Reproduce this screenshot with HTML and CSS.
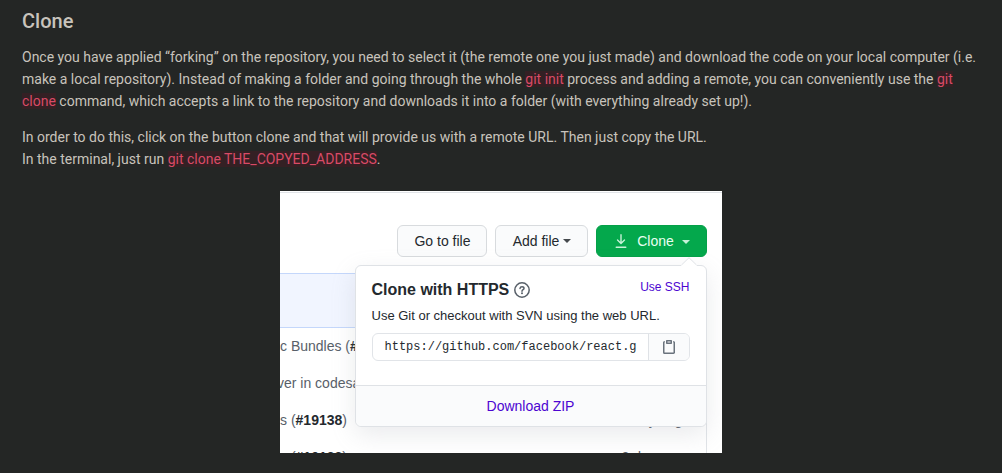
FILE: index.html
```html
<!DOCTYPE html>
<html lang="en">
<head>
<meta charset="utf-8">
<title>Clone</title>
<link rel="stylesheet" href="styles.css">
</head>
<body>
<main class="article">
  <h2 class="title">Clone</h2>
  <p class="para">Once you have applied “forking” on the repository, you need to select it (the remote one you just made) and download the code on your local computer (i.e. make a local repository). Instead of making a folder and going through the whole <code class="code">git init</code> process and adding a remote, you can conveniently use the <code class="code">git clone</code> command, which accepts a link to the repository and downloads it into a folder (with everything already set up!).</p>
  <p class="para">In order to do this, click on the button clone and that will provide us with a remote URL. Then just copy the URL.<br>In the terminal, just run <code class="code">git clone THE_COPYED_ADDRESS</code>.</p>
  <section class="shot">
    <div class="toolbar">
      <button class="btn btn-go">Go to file</button>
      <button class="btn btn-add">Add file<span class="caret"></span></button>
      <div class="clone-wrap">
        <button class="btn btn-clone">
          <svg class="dl" width="16" height="16" viewBox="0 0 16 16" fill="none" stroke="currentColor" stroke-width="1.4" stroke-linecap="round" stroke-linejoin="round"><path d="M8 1.800v8.400M4.500 7 8 10.500 11.500 7M3.200 14.200h9.600"/></svg>
          <span>Clone</span><span class="caret"></span>
        </button>
        <div class="popover">
          <svg class="tip" width="16" height="9" viewBox="0 0 16 9"><path d="M0 8.500 8 .7l8 7.800V9H0z" fill="#fff"/><path d="M.5 8 8 .7 15.500 8" fill="none" stroke="#dfe2e6"/></svg>
          <div class="pop-body">
            <div class="pop-head">
              <strong class="pop-title">Clone with HTTPS</strong>
              <svg class="help" width="16" height="16" viewBox="0 0 16 16" fill="none" stroke="currentColor" stroke-width="1.5"><circle cx="8" cy="8" r="7.200"/><path d="M6 6.400C6.200 5.300 7 4.800 8 4.800c1.200 0 2 .7 2 1.600C10 7.700 8 7.700 8 9.200" stroke-linecap="round"/><circle cx="8" cy="11.200" r="1" fill="currentColor" stroke="none"/></svg>
              <a class="ssh">Use SSH</a>
            </div>
            <div class="pop-desc">Use Git or checkout with SVN using the web URL.</div>
            <div class="field">
              <div class="url">https://github.com/facebook/react.g</div>
              <div class="copy"><svg width="16" height="16" viewBox="0 0 16 16" fill="none" stroke="currentColor" stroke-width="1.500"><path d="M3.800 2.750h-.3a.75.75 0 0 0-.75.75v10c0 .4.300.75.750.750h9a.75.75 0 0 0 .75-.75v-10a.75.75 0 0 0-.75-.75h-.3"/><path d="M5.750 1.750h4.500v2.500h-4.500z" stroke-linejoin="round"/></svg></div>
            </div>
          </div>
          <a class="zip">Download ZIP</a>
        </div>
      </div>
    </div>
    <div class="files">
      <div class="files-head"></div>
      <div class="row"><span class="msg">c Bundles (<b>#</b></span></div>
      <div class="row"><span class="msg msg-cut">ver in codesa</span></div>
      <div class="row"><span class="msg">s (<b>#19138</b>)</span><span>3 days ago</span></div>
      <div class="row"><span class="msg">s (<b>#19132</b>)</span><span>2 days ago</span></div>
    </div>
  </section>
</main>
</body>
</html>
```
FILE: styles.css
```css
* { box-sizing: border-box; }
body {
  margin: 0;
  height: 473px;
  overflow: hidden;
  background: #242625;
  color: #c8c3bc;
  font-family: Roboto, sans-serif;
}
.article { padding: 9px 22px 0; }
.title { margin: 0 0 13px; font-size: 20px; line-height: 24px; font-weight: 500; }
.para { margin: 0 0 14px; font-size: 14px; line-height: 22px; }
.code { font-family: inherit; color: #d94a66; background: #342024; }
.shot {
  width: 442px;
  height: 262px;
  margin: 21px auto 0;
  overflow: hidden;
  background: #fff;
  color: #24292e;
  font: 14px/20px "Liberation Sans", Arial, sans-serif;
}
.toolbar {
  display: flex;
  gap: 8px;
  height: 82px;
  margin-top: 1px;
  padding: 32px 15px 0 0;
  border-top: 1px solid #e1e4e8;
  justify-content: flex-end;
}
.btn {
  display: flex;
  align-items: center;
  justify-content: center;
  height: 32px;
  padding: 0;
  border: 1px solid #d8dbde;
  border-radius: 6px;
  background: #fafbfc;
  color: #24292e;
  font: inherit;
}
.btn-go { width: 90px; padding-left: 1px; }
.btn-add { width: 93px; padding-left: 1px; }
.caret { margin-left: 4px; border: 4px solid transparent; border-top-color: currentColor; border-bottom: 0; opacity: .85; }
.clone-wrap { position: relative; }
.btn-clone { width: 111px; background: #04a84c; border-color: #05a049; color: #e9fff1; }
.btn-clone .dl { margin-right: 8px; opacity: .85; }
.btn-clone .caret { margin-left: 8px; margin-top: 1px; }
.popover {
  position: absolute;
  top: 40px;
  right: 0;
  width: 352px;
  height: 162px;
  border: 1px solid #dfe2e6;
  border-radius: 6px;
  background: #fff;
  box-shadow: 0 8px 24px rgba(149, 157, 165, .2);
}
.tip { position: absolute; top: -9px; right: 9px; }
.pop-body { height: 119px; padding: 14px 16.5px 0 15.5px; }
.pop-head { display: flex; align-items: center; height: 20px; }
.pop-title { font-size: 16px; }
.help { margin-left: 5px; color: #586069; }
.ssh { margin-left: auto; margin-top: -6px; font-size: 12px; color: #4c05d1; }
.pop-desc { margin-top: 6px; font-size: 13px; }
.field { display: flex; width: 318px; height: 28px; margin-top: 7px; border: 1px solid #e1e4e8; border-radius: 6px; overflow: hidden; }
.url { flex: none; width: 275px; padding-left: 12px; white-space: nowrap; font: 12px/27px "Liberation Mono", monospace; }
.copy { display: flex; flex: 1; align-items: center; justify-content: center; border-left: 1px solid #dfe2e6; background: #fafbfc; color: #6a737d; }
.zip { display: block; height: 41px; padding-right: 1px; border-top: 1px solid #dfe2e6; border-radius: 0 0 6px 6px; background: #fafbfc; color: #4c05d1; text-align: center; line-height: 40px; }
.files { width: 427px; border-right: 1px solid #e1e4e8; color: #586069; }
.files-head { height: 55px; background: #f1f5ff; border: 1px solid #c4d7fb; border-width: 1px 0; margin-top: -1px; }
.row { display: flex; justify-content: space-between; height: 37px; padding: 8px 16px 0 0; }
.row b { color: #24292e; }
.msg-cut { margin-left: -3px; }
```
